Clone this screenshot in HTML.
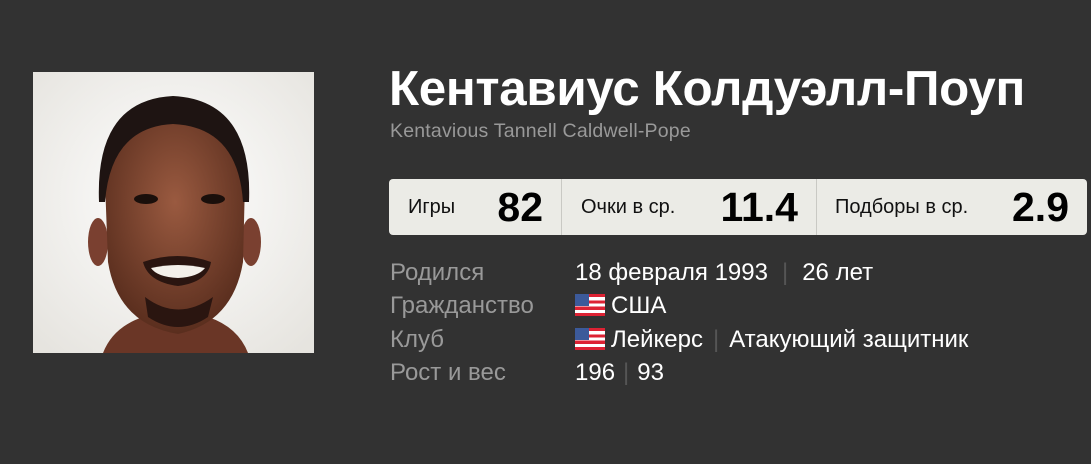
<!DOCTYPE html>
<html><head><meta charset="utf-8"><style>
body{margin:0;width:1091px;height:464px;background:#323232;font-family:"Liberation Sans",sans-serif;position:relative;overflow:hidden}
.a{position:absolute;white-space:nowrap}
.t{left:389px;top:60px;font-size:49.3px;font-weight:bold;color:#fff;letter-spacing:-0.3px}
.s{left:390px;top:120px;font-size:19.5px;color:#999;letter-spacing:0.2px}
.box{position:absolute;left:389px;top:179px;width:698px;height:56px;background:#ebebe6;border-radius:4px}
.c{position:absolute;top:0;height:56px}
.c span{position:absolute;top:17px;font-size:20px;color:#111}
.c b{position:absolute;top:5px;font-size:41px;color:#000;right:18px}
.dv{position:absolute;top:0;width:1px;height:56px;background:#c9c9c4}
.l{left:390px;font-size:24px;color:#999}
.v{left:575px;font-size:24px;color:#fff}
.sep{color:#555;margin:0 14px}
.fl{display:inline-block;width:30px;height:22px;vertical-align:-3px;margin-right:6px;background:repeating-linear-gradient(#d23 0 3.2px,#fff 3.2px 6.3px);position:relative}
.fl:before{content:"";position:absolute;left:0;top:0;width:14px;height:12px;background:#3c5a9a}
</style></head><body>
<svg class="a" style="left:33px;top:72px" width="281" height="281" viewBox="0 0 281 281">
<defs><radialGradient id="bg" cx="50%" cy="45%" r="70%"><stop offset="0" stop-color="#fff"/><stop offset="1" stop-color="#e6e4df"/></radialGradient>
<radialGradient id="sk" cx="50%" cy="40%" r="60%"><stop offset="0" stop-color="#9a5a40"/><stop offset="1" stop-color="#5a2e1e"/></radialGradient></defs>
<rect width="281" height="281" fill="url(#bg)"/>
<path d="M70 281 Q80 255 110 245 L175 245 Q205 255 215 281Z" fill="#6a3626"/>
<ellipse cx="65" cy="170" rx="10" ry="24" fill="#7a4030"/>
<ellipse cx="218" cy="170" rx="10" ry="24" fill="#7a4030"/>
<path d="M72 110 Q72 45 140 42 Q210 45 212 110 L210 190 Q200 250 145 262 Q85 252 75 190Z" fill="url(#sk)"/>
<path d="M66 130 Q62 28 140 24 Q220 28 216 130 L210 130 Q205 55 140 52 Q78 55 72 130Z" fill="#1e1412"/>
<ellipse cx="113" cy="127" rx="12" ry="5" fill="#1a0f0b"/>
<ellipse cx="180" cy="127" rx="12" ry="5" fill="#1a0f0b"/>
<path d="M110 190 Q145 178 178 190 Q175 210 145 214 Q115 210 110 190Z" fill="#2a1510"/>
<path d="M118 196 Q145 190 172 196 Q165 205 145 206 Q124 205 118 196Z" fill="#f4f0ea"/>
<path d="M112 225 Q145 250 180 225 L175 245 Q145 265 115 245Z" fill="#2a1510"/>
</svg>
<div class="a t">Кентавиус Колдуэлл-Поуп</div>
<div class="a s">Kentavious Tannell Caldwell-Pope</div>
<div class="box">
<div class="c" style="left:0;width:172px"><span style="left:19px">Игры</span><b>82</b></div>
<div class="dv" style="left:172px"></div>
<div class="c" style="left:173px;width:254px"><span style="left:19px">Очки в ср.</span><b>11.4</b></div>
<div class="dv" style="left:427px"></div>
<div class="c" style="left:428px;width:270px"><span style="left:18px">Подборы в ср.</span><b>2.9</b></div>
</div>
<div class="a l" style="top:259px">Родился</div>
<div class="a v" style="top:259px">18 февраля 1993<span class="sep">|</span>26 лет</div>
<div class="a l" style="top:292px">Гражданство</div>
<div class="a v" style="top:292px"><i class="fl"></i>США</div>
<div class="a l" style="top:326px">Клуб</div>
<div class="a v" style="top:326px"><i class="fl"></i>Лейкерс<span class="sep" style="margin:0 10px">|</span>Атакующий защитник</div>
<div class="a l" style="top:359px">Рост и вес</div>
<div class="a v" style="top:359px">196<span class="sep" style="margin:0 8px">|</span>93</div>
</body></html>
